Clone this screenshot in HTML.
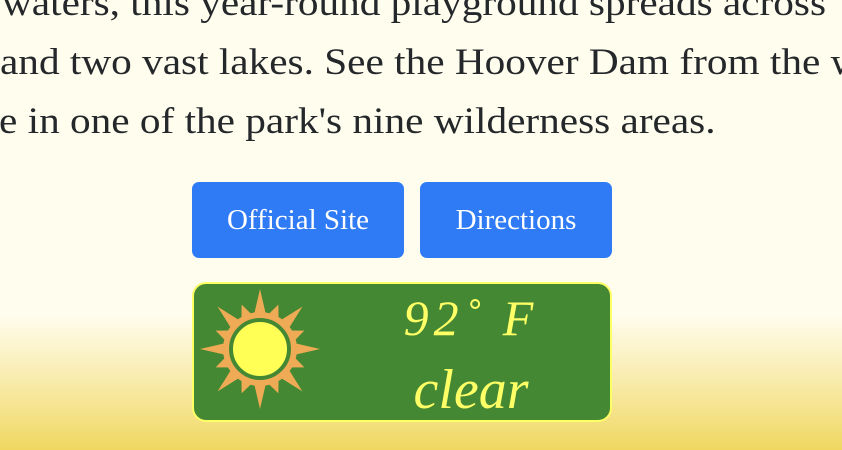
<!DOCTYPE html>
<html><head><meta charset="utf-8"><style>
html,body{margin:0;padding:0}
body{width:842px;height:450px;overflow:hidden;position:relative;
background:linear-gradient(to bottom,#fffdee 0px,#fffdee 315px,#fbf2c6 355px,#f5e38c 410px,#f0d860 450px);
font-family:"Liberation Serif",serif;}
.line{position:absolute;white-space:nowrap;font-size:37px;color:#25282b;line-height:40px;transform:scaleX(1.115);transform-origin:0 0}
.btn{position:absolute;top:182px;height:76px;background:#2f7bf5;border-radius:7px;color:#fff;font-size:29px;line-height:76px;text-align:center}
.w{position:absolute;left:192px;top:282px;width:416px;height:136px;background:#458833;border:2px solid #ffff66;border-radius:14px;overflow:hidden}
.t{position:absolute;left:150px;width:254px;text-align:center;color:#ffff66;font-style:italic;font-family:"Liberation Serif",serif;white-space:nowrap}
</style></head><body>
<div class="line" style="top:-16px;left:2px">waters, this year-round playground spreads across</div>
<div class="line" style="top:43px;left:0px">and two vast lakes. See the Hoover Dam from the w</div>
<div class="line" style="top:102px;left:-1px">e in one of the park's nine wilderness areas.</div>
<div class="btn" style="left:192px;width:212px">Official Site</div>
<div class="btn" style="left:420px;width:192px">Directions</div>
<div class="w">
<svg width="140" height="136" style="position:absolute;left:0;top:0">
<defs>
<path id="L" d="M-6,-34 L0,-60 L6,-34Z" fill="#eeaa55"/>
<path id="S" d="M-6,-34 L0,-48 L6,-34Z" fill="#eeaa55"/>
</defs>
<g transform="translate(66,65)">
<circle r="37" fill="#eeaa55"/>
<use href="#L"/><use href="#L" transform="rotate(45)"/><use href="#L" transform="rotate(90)"/><use href="#L" transform="rotate(135)"/>
<use href="#L" transform="rotate(180)"/><use href="#L" transform="rotate(225)"/><use href="#L" transform="rotate(270)"/><use href="#L" transform="rotate(315)"/>
<use href="#S" transform="rotate(22.5)"/><use href="#S" transform="rotate(67.5)"/><use href="#S" transform="rotate(112.5)"/><use href="#S" transform="rotate(157.5)"/>
<use href="#S" transform="rotate(202.5)"/><use href="#S" transform="rotate(247.5)"/><use href="#S" transform="rotate(292.5)"/><use href="#S" transform="rotate(337.5)"/>
<circle r="29" fill="#ffff55" stroke="#458833" stroke-width="4"/>
</g></svg>
<div class="t" style="top:6px;font-size:50px;line-height:56px;letter-spacing:5px">92˚ F</div>
<div class="t" style="top:76px;font-size:56px;line-height:60px">clear</div>
</div>
</body></html>
